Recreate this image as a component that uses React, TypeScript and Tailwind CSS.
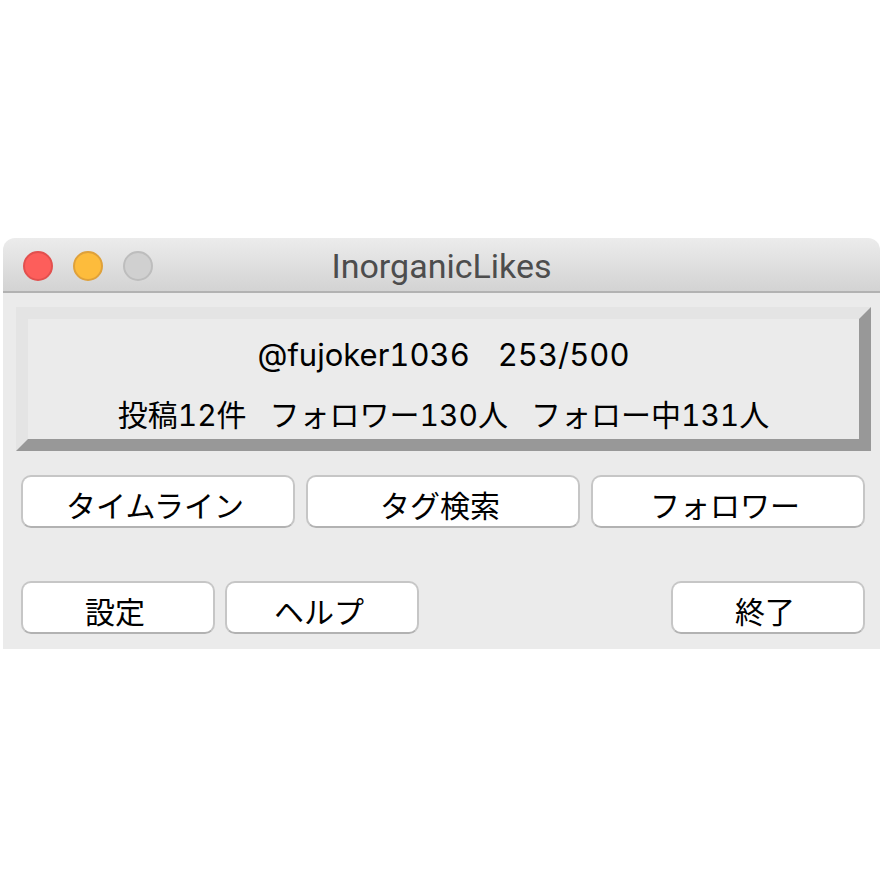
import type { ReactNode } from "react";

function PushButton({ children, className = "" }: { children: ReactNode; className?: string }) {
  return (
    <button
      type="button"
      className={`h-[53px] rounded-[10px] border-2 border-[#c6c6c6] border-b-[#b2b2b2] bg-white pt-2 pr-2 pl-0.5 text-[30px] leading-10 text-black ${className}`}
    >
      {children}
    </button>
  );
}

function TitleBar() {
  return (
    <header className="grid h-[55px] grid-cols-[1fr_auto_1fr] items-center rounded-t-xl border-b-2 border-[#b2b2b2] bg-linear-to-b from-[#ececec] to-[#d3d3d3] px-5 pt-0.5">
      <div className="flex gap-5">
        <button type="button" aria-label="閉じる" className="size-[30px] rounded-full border-2 border-[#e2504e] bg-[#fd5e5b]" />
        <button type="button" aria-label="しまう" className="size-[30px] rounded-full border-2 border-[#dfa13a] bg-[#fdbc3c]" />
        <button type="button" aria-label="拡大" disabled className="size-[30px] rounded-full border-2 border-[#bdbdbd] bg-[#d0d0d0]" />
      </div>
      <h1 className="text-[34px] leading-10 text-[#4d4d4d] font-['Roboto','Noto_Sans_CJK_JP',sans-serif]">InorganicLikes</h1>
    </header>
  );
}

export default function App() {
  return (
    <div className="flex min-h-screen flex-col justify-center bg-white pt-[7px] pl-[3px] font-['Inter','Noto_Sans_CJK_JP',sans-serif] text-black">
      <main className="bg-white">
        <TitleBar />
        <div className="bg-[#ebebeb] pt-[14px] pr-[9px] pb-[15px] pl-[13px]">
          <section className="border-[12px] border-t-[#e4e4e4] border-r-[#989898] border-b-[#989898] border-l-[#e4e4e4] pt-4 pb-1 leading-10 whitespace-nowrap tabular-nums">
            <p className="mb-5 flex justify-center gap-7 text-[31px] leading-10">
              <span>@fujoker1036</span>
              <span>253/500</span>
            </p>
            <p className="flex justify-center gap-[23px] text-[30px] leading-10">
              <span>投稿12件</span>
              <span>フォロワー130人</span>
              <span>フォロー中131人</span>
            </p>
          </section>
          <div className="mt-6 grid grid-cols-3 gap-[11px] pr-[6px] pl-[5px]">
            <PushButton>タイムライン</PushButton>
            <PushButton>タグ検索</PushButton>
            <PushButton>フォロワー</PushButton>
          </div>
          <div className="mt-[53px] flex gap-[10px] pr-[6px] pl-[5px]">
            <PushButton className="w-[194px]">設定</PushButton>
            <PushButton className="w-[194px]">ヘルプ</PushButton>
            <PushButton className="ml-auto w-[194px]">終了</PushButton>
          </div>
        </div>
      </main>
    </div>
  );
}
